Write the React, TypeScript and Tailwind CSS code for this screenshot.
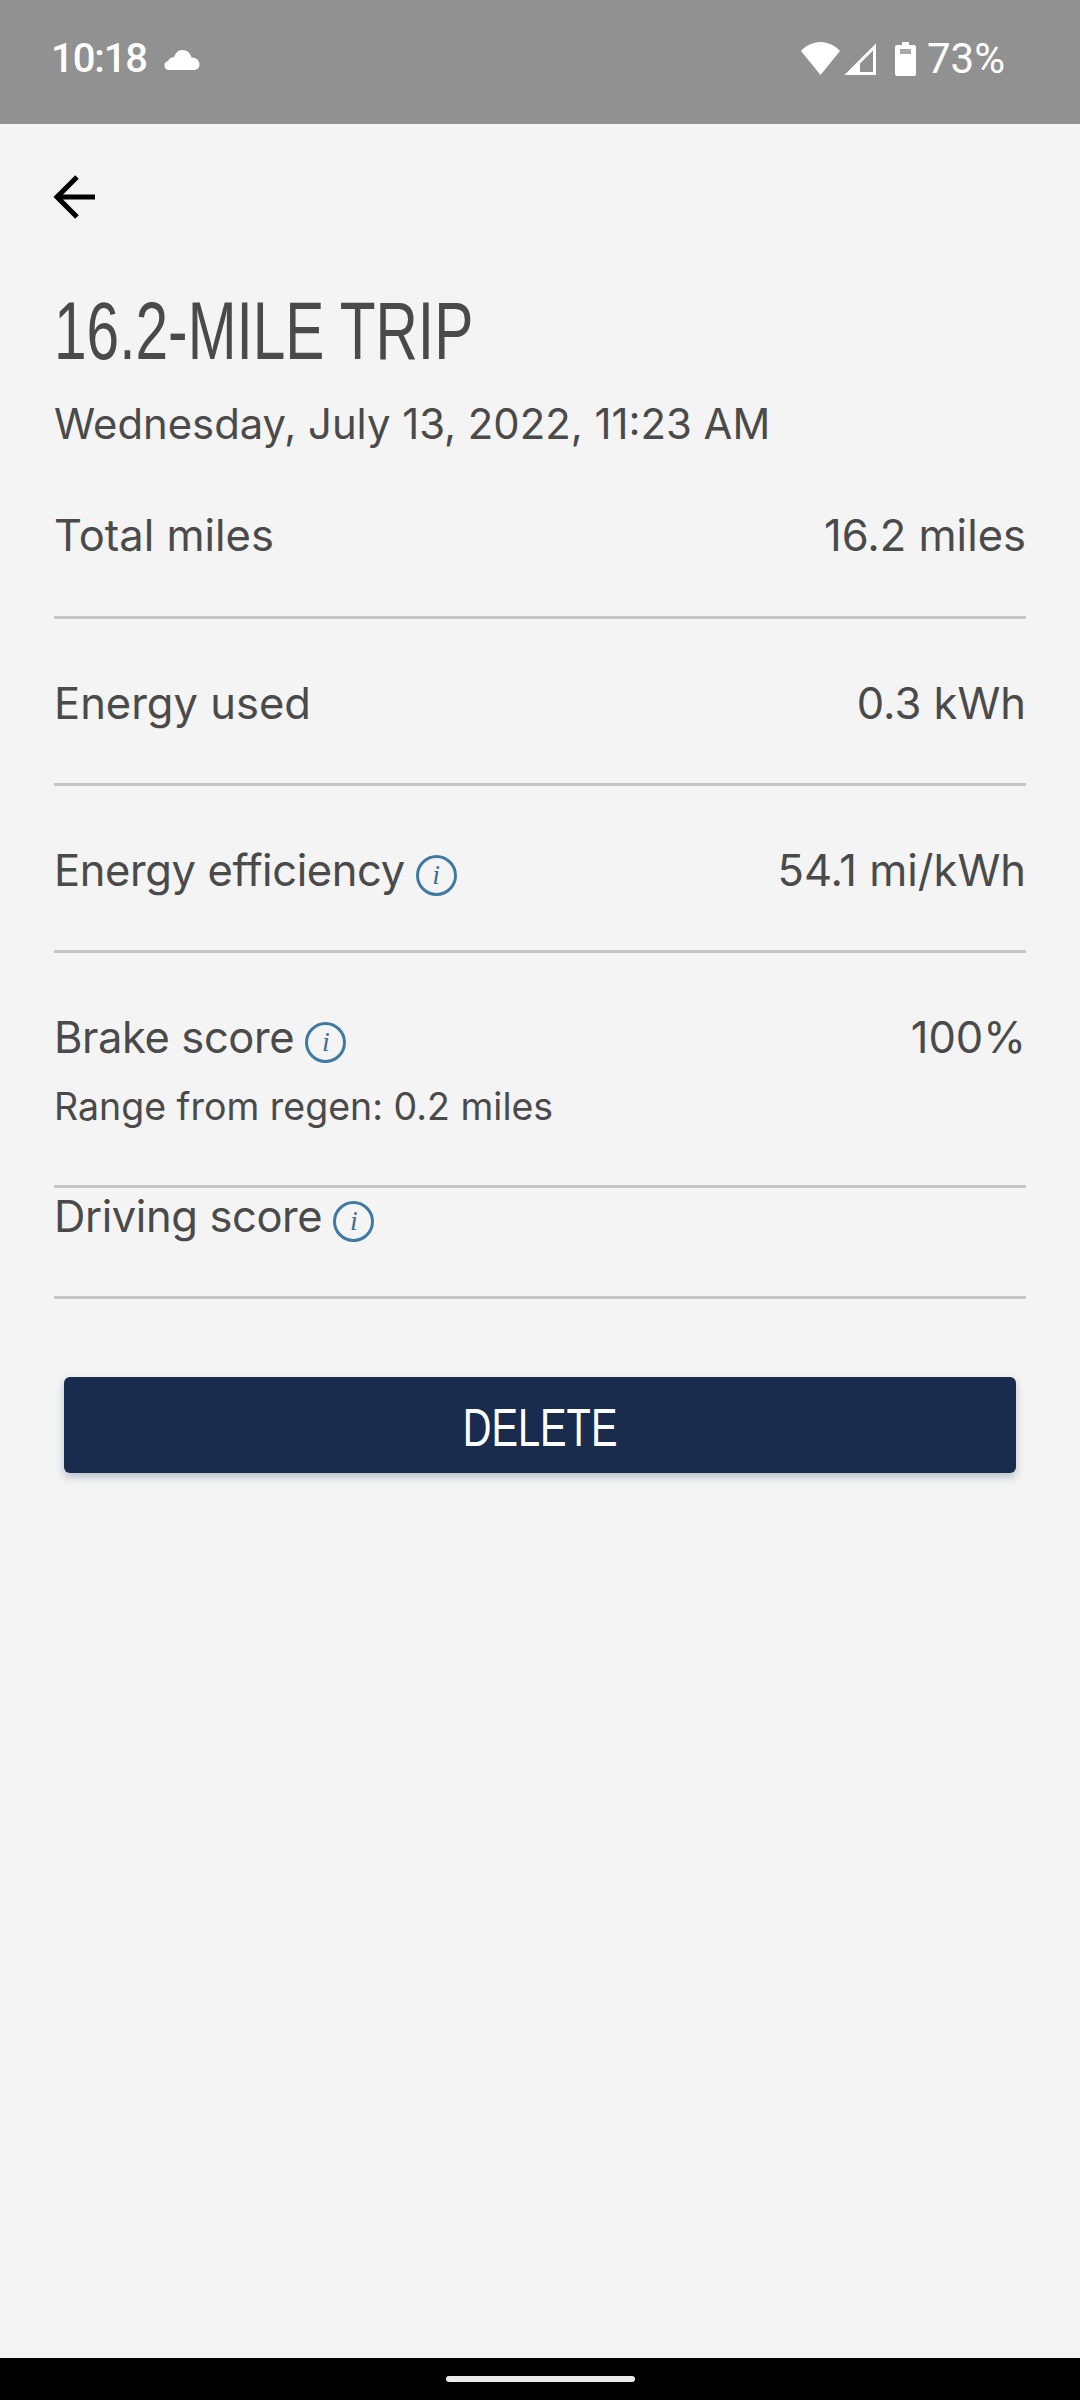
import React from "react";

const bodyFont = "font-['Inter','Open_Sans',sans-serif]";

function InfoIcon() {
  return (
    <span className="relative top-[5px] ml-[11px] inline-flex h-[41px] w-[41px] shrink-0 items-center justify-center rounded-full border-[3px] border-[#3f7aa3] font-['Liberation_Serif',serif] text-[28px] italic leading-none text-[#3f6f92]">
      i
    </span>
  );
}

function StatusBar() {
  return (
    <div className="flex h-[124px] items-start justify-between bg-[#919191] pl-[51px] pr-[75px] pt-[37px] font-['Roboto',sans-serif] text-white">
      <div className="flex items-center">
        <span className="text-[40px] font-medium leading-[44px] tracking-[-1.1px]">10:18</span>
        <svg className="ml-[17px] mt-[2px]" width="36" height="22" viewBox="0 0 36 22" fill="#fff">
          <path d="M5 21a4.500 4.500 0 0 1-1-8.900C5 9.500 7.500 8 10 8.300 11.500 3.500 14.500 1 18.500 1c4.500 0 8 3 9 7.500 4.500-.3 8 3 8 7 0 3.200-2.400 5.500-5.500 5.500H5z" />
        </svg>
      </div>
      <div className="flex items-start">
        <svg className="mt-[5px]" width="39" height="33" viewBox="0 0 39 33" fill="#fff">
          <path d="M0 9C5 3.500 12 0 19.500 0S34 3.500 39 9L19.500 33 0 9z" />
        </svg>
        <svg className="ml-[4px] mt-[6px]" width="32" height="32" viewBox="0 0 32 32">
          <path d="M30.500 4v26.500H4L30.500 4z" fill="none" stroke="#fff" strokeWidth="3" />
          <path d="M2 32l14-14v14H2z" fill="#fff" />
        </svg>
        <svg className="ml-[19px] mt-[5px]" width="21" height="34" viewBox="0 0 21 34">
          <path d="M7 0h7v3h5a2 2 0 0 1 2 2v27a2 2 0 0 1-2 2H2a2 2 0 0 1-2-2V5a2 2 0 0 1 2-2h5V0z" fill="#fff" />
          <rect x="5" y="7" width="11" height="5" fill="#a8a8a8" />
        </svg>
        <span className="ml-[11px] text-[42px] leading-[44px]">73%</span>
      </div>
    </div>
  );
}

function Row({ label, value, info, sub, className }: { label: string; value?: string; info?: boolean; sub?: string; className?: string }) {
  return (
    <div className={`border-b-[3px] border-[#c6c6c6] ${className ?? ""}`}>
      <div className="flex items-center justify-between">
        <div className="flex items-center">
          <span className={info ? "tracking-[-0.4px]" : ""}>{label}</span>
          {info && <InfoIcon />}
        </div>
        {value && <span>{value}</span>}
      </div>
      {sub && <div className="mt-[19px] text-[37.500px] leading-[46px]">{sub}</div>}
    </div>
  );
}

export default function App() {
  return (
    <div className={`flex h-[2400px] w-[1080px] flex-col bg-[#f4f4f4] text-[#4a4a4a] ${bodyFont}`}>
      <StatusBar />

      <div className="flex-1 px-[54px]">
        <div className="pt-[44px]">
          <svg width="58" height="58" viewBox="0 0 58 58" fill="none" stroke="#000" strokeWidth="5" className="-ml-[2px]">
            <path d="M43 29H5M25 9L5 29l20 20" />
          </svg>
        </div>

        <h1 className="mt-[63px] origin-left scale-x-[0.715] whitespace-nowrap font-['Liberation_Sans',sans-serif] text-[82px] leading-[84px] text-[#4a4a4a]">
          16.2-MILE TRIP
        </h1>
        <div className="mt-[23px] whitespace-nowrap text-[41.800px] leading-[56px]">Wednesday, July 13, 2022, 11:23 AM</div>

        <div className="mt-[55px] text-[43.500px] leading-[56px]">
          <Row label="Total miles" value="16.2 miles" className="h-[112px]" />
          <Row label="Energy used" value="0.3 kWh" className="h-[167px] pt-[56px]" />
          <Row label="Energy efficiency" value="54.1 mi/kWh" info className="h-[167px] pt-[56px]" />
          <Row label="Brake score" value="100%" info sub="Range from regen: 0.2 miles" className="h-[235px] pt-[56px]" />
          <Row label="Driving score" info className="h-[111px]" />
        </div>

        <button className="mx-[10px] mt-[78px] flex h-[96px] w-[952px] items-center justify-center rounded-[6px] bg-[#1a2c4e] pt-[5px] text-white shadow-[0_4px_8px_rgba(40,70,110,0.3)]">
          <span className="scale-x-[0.75] font-['Liberation_Sans',sans-serif] text-[53px] leading-none">DELETE</span>
        </button>
      </div>

      <div className="flex h-[42px] items-center justify-center bg-black">
        <div className="h-[6px] w-[189px] rounded-full bg-[#ececec]" />
      </div>
    </div>
  );
}
